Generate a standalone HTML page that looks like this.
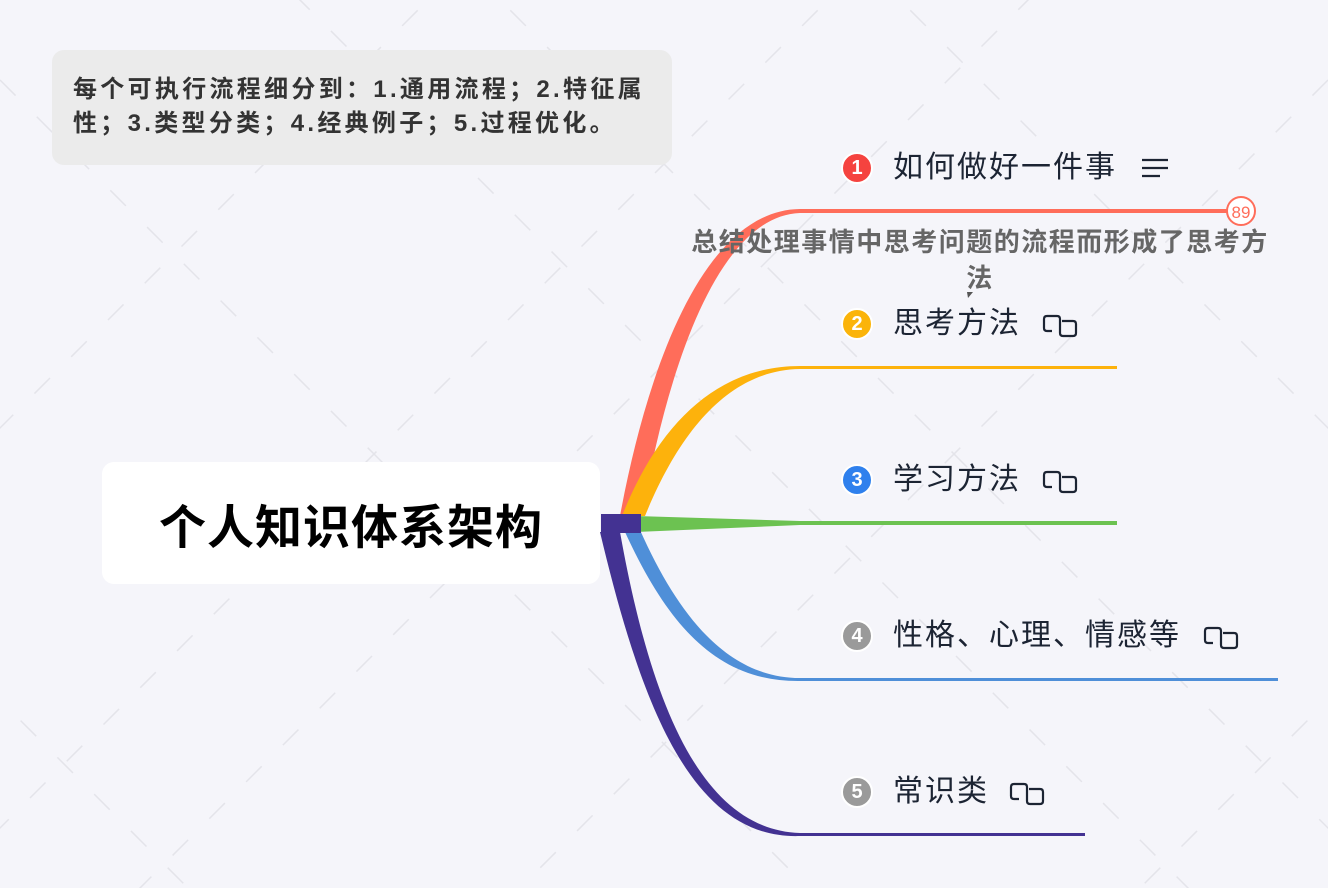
<!DOCTYPE html>
<html><head><meta charset="utf-8"><style>
body{margin:0;width:1328px;height:888px;background:#f5f5fa;overflow:hidden;position:relative;font-family:"Liberation Sans","Noto Sans CJK SC",sans-serif}
.note{position:absolute;left:52px;top:50px;width:620px;height:115px;background:#ebebeb;border-radius:12px;box-sizing:border-box;padding:23px 0 0 21px;font-size:24px;font-weight:bold;color:#333;line-height:34px;white-space:nowrap;letter-spacing:3.3px}
.central{position:absolute;left:102px;top:462px;width:498px;height:122px;background:#fff;border-radius:12px;display:flex;align-items:center;justify-content:center;font-size:47px;font-weight:bold;color:#000;letter-spacing:1px}
.lbl{position:absolute;left:893px;font-size:30px;color:#1c2433;line-height:36px;white-space:nowrap;letter-spacing:2px}
.num{position:absolute;left:841px;width:28px;height:28px;border-radius:50%;border:2px solid #fff;color:#fff;font-weight:bold;font-size:20px;text-align:center;line-height:28px}
.sum{position:absolute;left:680px;top:224px;width:600px;text-align:center;font-size:26px;font-weight:bold;color:#666;line-height:36px;letter-spacing:1.5px;white-space:nowrap}
</style></head><body>
<svg width="1328" height="888" style="position:absolute;left:0;top:0">
<g stroke="#e4e4ea" stroke-width="1.5" stroke-dasharray="22 30" fill="none">
<path d="M0,80 L800,880 M0,-300 L1200,900 M400,-100 L1400,900 M800,-100 L1400,500 M-200,500 L200,900"/>
<path d="M1328,80 L528,880 M1328,-300 L128,900 M928,-100 L-72,900 M528,-100 L-72,500 M1528,500 L1128,900"/>
</g>
<path d="M620,516 C645,380 700,210 800,209 L800,213 C715,216 665,380 642,516 Z" fill="#ff6d5a"/>
<rect x="800" y="209" width="430" height="4" fill="#ff6d5a"/>
<circle cx="1241" cy="211" r="14" fill="#fff" stroke="#ff6d5a" stroke-width="2"/>
<text x="1241" y="218" font-size="17" fill="#ff6d5a" text-anchor="middle" font-family="Liberation Sans">89</text>
<path d="M622,516 C660,420 720,366 800,366 L800,369 C730,370 680,430 645,516 Z" fill="#fdb20c"/>
<rect x="800" y="366" width="317" height="3" fill="#fdb20c"/>
<path d="M636,516 L800,521 L800,525 L636,532 Z" fill="#6cc251"/>
<rect x="800" y="521" width="317" height="4" fill="#6cc251"/>
<path d="M640,530 C680,620 730,678 800,678 L800,681 C720,682 670,630 625,532 Z" fill="#4f8fd8"/>
<rect x="800" y="678" width="478" height="3" fill="#4f8fd8"/>
<path d="M620,532 C650,700 700,830 800,833 L800,836 C690,840 640,700 600,532 Z" fill="#433292"/>
<rect x="601" y="514" width="40" height="19" fill="#433292"/>
<rect x="800" y="833" width="285" height="3" fill="#433292"/>
<path d="M967,292 L973,292 L968,298 Z" fill="#555"/>
<g stroke="#1c2433" stroke-width="2.2" fill="none">
<path d="M1142,160 H1168 M1142,168 H1168 M1142,176 H1160"/>
<g id="lk"><path d="M1052,331 H1047 Q1044,331 1044,328 V319 Q1044,316 1047,316 H1057 Q1060,316 1060,319 V326"/><path d="M1062,321 H1073 Q1076,321 1076,324 V333 Q1076,336 1073,336 H1063 Q1060,336 1060,333 V326"/></g>
<use href="#lk" y="156"/><use href="#lk" x="161" y="312"/><use href="#lk" x="-33" y="468"/>
</g>
</svg>
<div class="note">每个可执行流程细分到：1.通用流程；2.特征属<br>性；3.类型分类；4.经典例子；5.过程优化。</div>
<div class="central">个人知识体系架构</div>
<div class="num" style="top:152px;background:#f5433f">1</div>
<div class="num" style="top:308px;background:#fbb40a">2</div>
<div class="num" style="top:464px;background:#2f80ed">3</div>
<div class="num" style="top:620px;background:#9a9a9a">4</div>
<div class="num" style="top:776px;background:#9a9a9a">5</div>
<div class="lbl" style="top:150px">如何做好一件事</div>
<div class="lbl" style="top:306px">思考方法</div>
<div class="lbl" style="top:462px">学习方法</div>
<div class="lbl" style="top:618px">性格、心理、情感等</div>
<div class="lbl" style="top:774px">常识类</div>
<div class="sum">总结处理事情中思考问题的流程而形成了思考方<br>法</div>
</body></html>
